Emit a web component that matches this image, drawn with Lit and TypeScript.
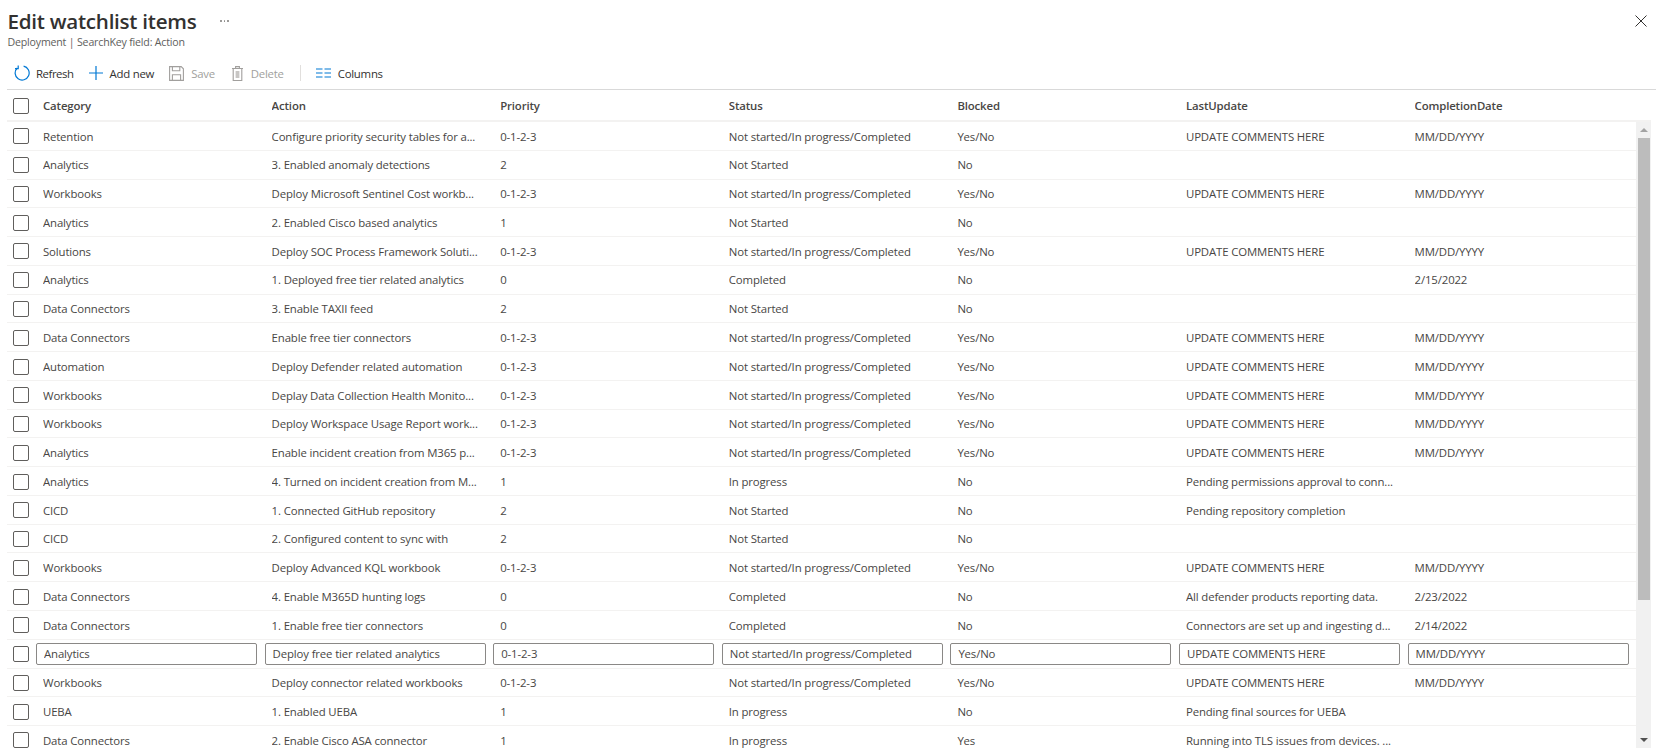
import { LitElement, html, css, nothing } from "lit";
import { customElement } from "lit/decorators.js";

const COLS = ["Category", "Action", "Priority", "Status", "Blocked", "LastUpdate", "CompletionDate"];
const T = "Not started/In progress/Completed";
const U = "UPDATE COMMENTS HERE";
const M = "MM/DD/YYYY";
const P = "0-1-2-3";
const Y = "Yes/No";
const NS = "Not Started";

const ROWS: string[][] = [
  ["Retention", "Configure priority security tables for a...", P, T, Y, U, M],
  ["Analytics", "3. Enabled anomaly detections", "2", NS, "No", "", ""],
  ["Workbooks", "Deploy Microsoft Sentinel Cost workb...", P, T, Y, U, M],
  ["Analytics", "2. Enabled Cisco based analytics", "1", NS, "No", "", ""],
  ["Solutions", "Deploy SOC Process Framework Soluti...", P, T, Y, U, M],
  ["Analytics", "1. Deployed free tier related analytics", "0", "Completed", "No", "", "2/15/2022"],
  ["Data Connectors", "3. Enable TAXII feed", "2", NS, "No", "", ""],
  ["Data Connectors", "Enable free tier connectors", P, T, Y, U, M],
  ["Automation", "Deploy Defender related automation", P, T, Y, U, M],
  ["Workbooks", "Deplay Data Collection Health Monito...", P, T, Y, U, M],
  ["Workbooks", "Deploy Workspace Usage Report work...", P, T, Y, U, M],
  ["Analytics", "Enable incident creation from M365 p...", P, T, Y, U, M],
  ["Analytics", "4. Turned on incident creation from M...", "1", "In progress", "No", "Pending permissions approval to conn...", ""],
  ["CICD", "1. Connected GitHub repository", "2", NS, "No", "Pending repository completion", ""],
  ["CICD", "2. Configured content to sync with", "2", NS, "No", "", ""],
  ["Workbooks", "Deploy Advanced KQL workbook", P, T, Y, U, M],
  ["Data Connectors", "4. Enable M365D hunting logs", "0", "Completed", "No", "All defender products reporting data.", "2/23/2022"],
  ["Data Connectors", "1. Enable free tier connectors", "0", "Completed", "No", "Connectors are set up and ingesting d...", "2/14/2022"],
  ["Analytics", "Deploy free tier related analytics", P, T, Y, U, M],
  ["Workbooks", "Deploy connector related workbooks", P, T, Y, U, M],
  ["UEBA", "1. Enabled UEBA", "1", "In progress", "No", "Pending final sources for UEBA", ""],
  ["Data Connectors", "2. Enable Cisco ASA connector", "1", "In progress", "Yes", "Running into TLS issues from devices. ...", ""],
];
const EDIT_ROW = 18;

@customElement("app-root")
export class AppRoot extends LitElement {
  static styles = css`
    :host {
      display: block;
      width: 1656px;
      height: 753px;
      overflow: hidden;
      background: #fff;
      font-family: "Open Sans", "Noto Sans", sans-serif;
      font-size: 11.4px;
      letter-spacing: -0.14px;
      color: #484644;
    }
    .head { height: 56px; padding-left: 7.5px; position: relative; box-sizing: border-box; }
    .title-line { display: flex; align-items: center; height: 38px; padding-top: 3px; box-sizing: border-box; }
    h1 { margin: 0; font-size: 20.6px; font-weight: 600; color: #323130; letter-spacing: -0.26px; }
    .more { margin-left: 24px; width: 10px; display: flex; gap: 2px; margin-top: 1px; }
    .more i { width: 1.5px; height: 1.5px; background: #8a8886; border-radius: 50%; }
    .sub { font-size: 10.6px; color: #605e5c; line-height: 14px; margin-top: -3px; letter-spacing: -0.18px; }
    .close { position: absolute; top: 15px; right: 9px; width: 12px; height: 12px; }
    .toolbar {
      height: 34px;
      margin-left: 7px;
      border-bottom: 1px solid #d9d9d9;
      box-sizing: border-box;
      display: flex;
      align-items: center;
      padding-left: 7px;
      padding-top: 1px;
      letter-spacing: -0.25px;
    }
    .btn { display: flex; align-items: center; color: #323130; }
    .btn svg { display: block; flex: none; }
    .btn span { margin-left: 7px; }
    .btn.first span { margin-left: 6px; letter-spacing: -0.45px; }
    .btn.off { color: #a19f9d; }
    .ml14 { margin-left: 14px; }
    .ml15 { margin-left: 15px; }
    .ml16 { margin-left: 16px; }
    .divider { width: 1px; height: 16px; background: #e1dfdd; }
    .table-head, .row {
      display: grid;
      grid-template-columns: 36px repeat(7, 228.6px);
      align-items: center;
      margin-left: 7px;
      white-space: nowrap;
    }
    .table-head {
      height: 32px;
      box-sizing: border-box;
      border-bottom: 2px solid #f3f2f1;
      font-weight: 600;
      color: #484644;
      margin-right: 5px;
    }
    .body { display: flex; height: 626px; overflow: hidden; margin-right: 5px; }
    .rows { flex: 1; min-width: 0; overflow: hidden; }
    .row { height: 28.78px; box-sizing: border-box; border-bottom: 1px solid #f3f2f1; }
    .row .cell { padding-top: 0.5px; }
    .cb {
      width: 16px;
      height: 16px;
      box-sizing: border-box;
      margin: 1px 0 0 5.5px;
      border: 1.5px solid #605e5c;
      border-radius: 2px;
      background: #fff;
    }
    .cell { overflow: hidden; }
    .field {
      display: block;
      box-sizing: border-box;
      width: 221px;
      height: 22px;
      margin: 0 0 0 -7px;
      padding: 0 7px;
      border: 1px solid #8a8886;
      border-radius: 2px;
      background: #fff;
      font: inherit;
      letter-spacing: inherit;
      color: inherit;
      outline: none;
    }
    .edit .cell { overflow: visible; }
    .scroll { width: 15px; flex: none; background: #f1f1f1; display: flex; flex-direction: column; align-items: center; }
    .arrow { flex: none; height: 16px; width: 100%; display: flex; align-items: center; justify-content: center; }
    .up { width: 0; height: 0; border-left: 4px solid transparent; border-right: 4px solid transparent; border-bottom: 4px solid #a3a3a3; }
    .down { width: 0; height: 0; border-left: 4px solid transparent; border-right: 4px solid transparent; border-top: 4px solid #505050; }
    .thumb { width: 12px; height: 462px; background: #bcbcbc; flex: none; }
    .fill { flex: 1; }
  `;

  render() {
    return html`
      <div class="head">
        <div class="title-line">
          <h1>Edit watchlist items</h1>
          <div class="more"><i></i><i></i><i></i></div>
        </div>
        <div class="sub">Deployment | SearchKey field: Action</div>
        <svg class="close" viewBox="0 0 12 12" fill="none" stroke="#323130" stroke-width="1"><path d="M.5.5l11 11M11.5.5l-11 11"/></svg>
      </div>
      <div class="toolbar">
        <div class="btn first">
          <svg width="16" height="16" viewBox="0 0 16 16" fill="none" stroke="#0078d4" stroke-width="1.2">
            <path d="M9.6 1.2A7 7 0 1 1 3.3 3"/><path d="M4.2 .6v3H1"/>
          </svg>
          <span>Refresh</span>
        </div>
        <div class="btn ml15">
          <svg width="14" height="14" viewBox="0 0 14 14" fill="none" stroke="#0078d4" stroke-width="1.2"><path d="M7 0v14M0 7h14"/></svg>
          <span>Add new</span>
        </div>
        <div class="btn off ml15">
          <svg width="15" height="15" viewBox="0 0 15 15" fill="none" stroke="#a19f9d" stroke-width="1.1">
            <path d="M.6.6h11.6l2.2 2.2v11.6H.6z"/><path d="M3.4.6v4.2h7.4V.6M3.4 14.4V8.8h8.2v5.6"/>
          </svg>
          <span>Save</span>
        </div>
        <div class="btn off ml16">
          <svg width="13" height="15" viewBox="0 0 13 15" fill="none" stroke="#a19f9d" stroke-width="1.1">
            <path d="M1 2.5h11M2.2 2.5v12h8.6v-12M4.6 2.5V.6h3.8v1.9"/><path d="M4.6 5h3.8v7H4.6z" fill="#c8c6c4" stroke="none"/>
          </svg>
          <span>Delete</span>
        </div>
        <div class="divider ml16"></div>
        <div class="btn ml15">
          <svg width="15" height="10" viewBox="0 0 15 10" fill="none" stroke="#0078d4" stroke-width="1.1"><path d="M0 1h6.5M8.5 1H15M0 5h6.5M8.5 5H15M0 9h6.5M8.5 9H15"/></svg>
          <span>Columns</span>
        </div>
      </div>
      <div class="table-head">
        <div class="cb"></div>
        ${COLS.map((c) => html`<div class="cell">${c}</div>`)}
      </div>
      <div class="body">
        <div class="rows">
          ${ROWS.map(
            (r, i) => html`<div class="row ${i === EDIT_ROW ? "edit" : ""}">
              <div class="cb"></div>
              ${r.map((v) =>
                html`<div class="cell">${i === EDIT_ROW
                  ? html`<input class="field" .value=${v} />`
                  : v || nothing}</div>`
              )}
            </div>`
          )}
        </div>
        <div class="scroll">
          <div class="arrow"><div class="up"></div></div>
          <div class="thumb"></div>
          <div class="fill"></div>
          <div class="arrow"><div class="down"></div></div>
        </div>
      </div>
    `;
  }
}
